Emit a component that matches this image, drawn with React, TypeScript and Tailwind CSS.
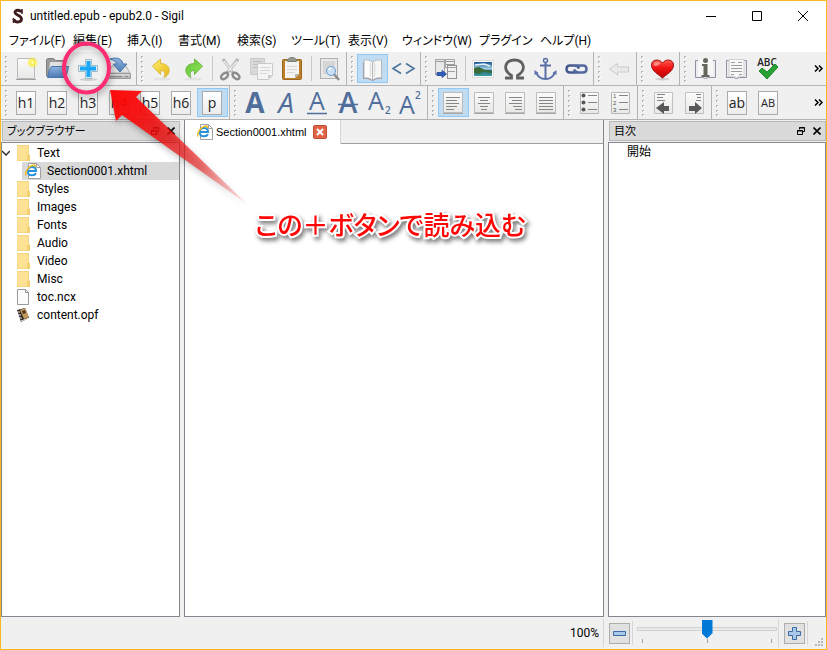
import React, { useState } from 'react';

const LATIN = "font-['Roboto','Noto_Sans_CJK_JP',sans-serif]";

/* ---------- Tool bar building blocks ---------- */

function Handle() {
  return (
    <span aria-hidden="true" className="flex w-[10px] shrink-0 justify-center pt-[2px]">
      <svg width="4" height="26" viewBox="0 0 4 26">
        {[0, 5, 10, 15, 20, 24].map((y) => (
          <g key={y}>
            <rect x="1" y={y} width="2" height="2" fill="#b4b4b4" />
            <rect x="2" y={y + 1} width="2" height="1" fill="#fff" />
          </g>
        ))}
      </svg>
    </span>
  );
}

function Group({ label, children, last = false }: { label: string; children: React.ReactNode; last?: boolean }) {
  return (
    <div
      role="toolbar"
      aria-label={label}
      className={
        last
          ? 'flex shrink-0 items-start'
          : 'flex shrink-0 items-start border-r border-[#b3b3b3] pr-px'
      }
    >
      <Handle />
      {children}
    </div>
  );
}

function Tool({ label, active = false, children }: { label: string; active?: boolean; children: React.ReactNode }) {
  return (
    <button
      type="button"
      aria-label={label}
      aria-pressed={active}
      className={
        active
          ? 'flex h-[29px] w-[31px] shrink-0 items-center justify-center bg-[#c0dcf3] outline outline-1 -outline-offset-1 outline-[#90c8f6]'
          : 'flex h-[29px] w-[31px] shrink-0 items-center justify-center hover:bg-[#dcebf7]'
      }
    >
      {children}
    </button>
  );
}

function Sep() {
  return <span className="flex h-[29px] w-[6px] shrink-0 justify-center py-[2px]"><span className="w-px bg-[#c8c8c8]" /></span>;
}

function Pic({ children }: { children: React.ReactNode }) {
  return (
    <svg width="31" height="29" viewBox="1 0 31 29" fill="none" className="shrink-0 overflow-visible" aria-hidden="true">
      {children}
    </svg>
  );
}

function Tile({ text, small = false }: { text: string; small?: boolean }) {
  return (
    <span
      className={
        (small ? 'text-[11px]' : 'text-[14px]') +
        " mr-px flex h-6 w-5 items-center justify-center border border-[#ababab] bg-linear-to-b from-white to-[#ececec] font-['Open_Sans',sans-serif] leading-none text-[#222]"
      }
    >
      {text}
    </span>
  );
}

function Lines({ rows }: { rows: [number, number, number][] }) {
  return (
    <Pic>
      <path d="M6.500 4.500h19v20h-19z" fill="url(#paper)" stroke="#bcbcbc" />
      <path d="M6 25.500h20" stroke="#a6a6a6" />
      {rows.map(([x1, x2, y]) => (
        <path key={y} d={`M${x1} ${y}H${x2}`} stroke="#858585" />
      ))}
    </Pic>
  );
}

function LetterA({ kind }: { kind: 'bold' | 'italic' | 'under' | 'strike' | 'sub' | 'super' }) {
  const small = kind === 'sub' || kind === 'super';
  return (
    <Pic>
      <g fill="#4f6e9c" className="font-['Open_Sans',sans-serif]">
        <text
          x={small ? 13 : 16}
          y={kind === 'super' ? 26 : kind === 'sub' ? 22 : kind === 'under' ? 22 : 25}
          textAnchor="middle"
          fontSize={small ? 25 : kind === 'under' ? 25 : 28}
          fontWeight={kind === 'bold' ? 700 : kind === 'strike' ? 600 : 500}
          fontStyle={kind === 'italic' ? 'italic' : 'normal'}
        >
          A
        </text>
        {kind === 'sub' && <text x="22" y="26" fontSize="10" fontWeight="600">2</text>}
        {kind === 'super' && <text x="21" y="11" fontSize="10" fontWeight="600">2</text>}
      </g>
      {kind === 'under' && <path d="M6 25.500h20" stroke="#4f6e9c" strokeWidth="1.500" />}
      {kind === 'strike' && <path d="M6 16.500h20" stroke="#4f6e9c" strokeWidth="1.500" />}
    </Pic>
  );
}

function Defs() {
  return (
    <svg width="0" height="0" className="absolute" aria-hidden="true">
      <defs>
        <linearGradient id="paper" x1="0" y1="0" x2="0" y2="1">
          <stop offset="0" stopColor="#fbfbfb" />
          <stop offset="1" stopColor="#e8e8e6" />
        </linearGradient>
        <linearGradient id="metal" x1="0" y1="0" x2="0" y2="1">
          <stop offset="0" stopColor="#e2e2e2" />
          <stop offset="1" stopColor="#a8a8a8" />
        </linearGradient>
        <linearGradient id="blue" x1="0" y1="0" x2="0" y2="1">
          <stop offset="0" stopColor="#8fb5df" />
          <stop offset="1" stopColor="#4c7ab4" />
        </linearGradient>
        <linearGradient id="gold" x1="0" y1="0" x2="1" y2="1">
          <stop offset="0" stopColor="#fff06c" />
          <stop offset="1" stopColor="#e6b41c" />
        </linearGradient>
        <linearGradient id="green" x1="0" y1="0" x2="1" y2="1">
          <stop offset="0" stopColor="#67c23a" />
          <stop offset="1" stopColor="#8fe856" />
        </linearGradient>
        <radialGradient id="glow">
          <stop offset="0" stopColor="#fffde0" />
          <stop offset=".35" stopColor="#fbf24a" />
          <stop offset="1" stopColor="#f7ea2a" stopOpacity="0" />
        </radialGradient>
        <linearGradient id="heart" x1="0" y1="0" x2="0" y2="1">
          <stop offset="0" stopColor="#ff5a4e" />
          <stop offset=".45" stopColor="#f01414" />
          <stop offset="1" stopColor="#b80000" />
        </linearGradient>
        <linearGradient id="sea" x1="0" y1="0" x2="0" y2="1">
          <stop offset="0" stopColor="#17548f" />
          <stop offset=".5" stopColor="#a8d4e8" />
          <stop offset=".6" stopColor="#2f6f84" />
          <stop offset="1" stopColor="#3b9aa4" />
        </linearGradient>
      </defs>
    </svg>
  );
}

/* ---------- Pictures ---------- */

const NewPic = () => (
  <Pic>
    <path d="M7.500 4.500h17v20h-17z" fill="url(#paper)" stroke="#b9b9b9" />
    <path d="M6 25.500h20" stroke="#a0a0a0" />
    <circle cx="22.500" cy="8.500" r="6" fill="url(#glow)" />
  </Pic>
);

const OpenPic = () => (
  <Pic>
    <path d="M5.500 22V5.500l1-1h6l2 2h9l1 1V22z" fill="#9a9a9a" stroke="#808080" />
    <path d="M9 8h14l1 12H8z" fill="#e2e2e2" />
    <path d="M10.500 12.500h17l-2.500 11H6.500l2-8z" fill="url(#blue)" stroke="#4a76ae" />
  </Pic>
);

const PlusPic = () => (
  <Pic>
    <ellipse cx="16.500" cy="25.500" rx="9" ry="1.500" fill="#cfcfcf" />
    <path d="M13.500 5.500h6v6h6v6h-6v7h-6v-7h-7v-6h7z" fill="#d9f0fb" stroke="#a3bac7" />
    <path d="M16.500 7v16M8 14.500h16" stroke="#1aa7f5" strokeWidth="4" />
  </Pic>
);

const SavePic = () => (
  <Pic>
    <path d="M9 12h14l4 7H5z" fill="#e2e2e2" stroke="#b0b0b0" />
    <path d="M4.500 19.500h23v5h-23z" fill="url(#metal)" stroke="#9a9a9a" />
    <path d="M7 5c6-2 12-1 13 5h4l-7 8-7-8h4c-1-2-3-4-7-5z" fill="url(#blue)" stroke="#4a78b2" />
    <path d="M7 22.500h12M22 22.500h3" stroke="#8a8a8a" />
  </Pic>
);

const UndoPic = () => (
  <Pic>
    <ellipse cx="16" cy="25" rx="9" ry="1.500" fill="#e2e2e2" />
    <path d="M6.500 12l8-7v4.500c6 0 9.500 3.500 8.500 8.500-.5 2.500-3 5-5 5.500 1.500-3 1.500-7-3.500-7v4z" fill="url(#gold)" stroke="#dcb93c" />
  </Pic>
);

const RedoPic = () => (
  <Pic>
    <ellipse cx="16" cy="25" rx="9" ry="1.500" fill="#e2e2e2" />
    <path d="M25.500 12l-8-7v4.500c-6 0-9.500 3.500-8.500 8.500.5 2.500 3 5 5 5.500-1.500-3-1.500-7 3.500-7v4z" fill="url(#green)" stroke="#6fb84c" />
  </Pic>
);

const CutPic = () => (
  <Pic>
    <path d="M9 5l10 14M24 5L13 19" stroke="#b2b2b2" strokeWidth="3" />
    <path d="M10 7l8 10M23 7l-9 10" stroke="#ececec" strokeWidth="1.500" />
    <ellipse cx="10.500" cy="22" rx="4" ry="2.500" transform="rotate(-40 10.500 22)" stroke="#8c8c8c" strokeWidth="2.500" />
    <ellipse cx="22" cy="22" rx="4" ry="2.500" transform="rotate(40 22 22)" stroke="#8c8c8c" strokeWidth="2.500" />
  </Pic>
);

const CopyPic = () => (
  <Pic>
    <path d="M5.500 4.500h14v16h-14z" fill="#d9d9d9" stroke="#cacaca" />
    <path d="M8 7.500h9M8 10.500h7M8 13.500h4" stroke="#bdbdbd" />
    <path d="M12.500 9.500h15v12l-4 4h-11z" fill="#f4f4f4" stroke="#cacaca" />
    <path d="M15 13.500h10M15 16.500h10M15 19.500h7" stroke="#d6d6d6" />
    <path d="M27 21l-4 4v-4z" fill="#c9c9c9" />
  </Pic>
);

const PastePic = () => (
  <Pic>
    <rect x="6.500" y="5.500" width="19" height="20" rx="1" fill="#bd7f28" stroke="#9a6821" />
    <path d="M9 7h14v13l-4 4H9z" fill="#f3f3f1" />
    <path d="M23 20l-4 4v-4z" fill="#b5b5b5" />
    <path d="M11 12.500h10M11 15.500h10M11 18.500h8" stroke="#d8d8d8" />
    <path d="M11.500 7.500v-2l3-2h3l3 2v2z" fill="#949990" stroke="#7c8076" />
  </Pic>
);

const FindPic = () => (
  <Pic>
    <rect x="7.500" y="4.500" width="17" height="20" fill="#e8e8e8" stroke="#b0b0b0" />
    <path d="M10 7h12v13H10z" fill="#d6d6d6" />
    <path d="M21 20l5 6" stroke="#8a8d93" strokeWidth="2.500" />
    <circle cx="18" cy="17" r="4.500" fill="#c9e0f5" stroke="#6d9acd" />
    <path d="M15.500 16q1-2 3-2" stroke="#fff" strokeWidth="1.500" />
  </Pic>
);

const BookPic = () => (
  <Pic>
    <path d="M7 8v17q5-1 9.500 2 4.500-3 9.500-2V8" fill="#8b8d96" />
    <path d="M8 6q5-1 8.500 2v18q-3.500-3-8.500-2z" fill="#fdfdfd" stroke="#b8b8b8" />
    <path d="M25.500 6q-5-1-9 2v18q4-3 9-2z" fill="#f6f6f6" stroke="#b8b8b8" />
    <path d="M14.500 9v14M18.500 9v14" stroke="#e0e0e0" strokeWidth="1.500" />
  </Pic>
);

const CodePic = () => (
  <Pic>
    <path d="M14 9.500l-8 5 8 5M19 9.500l8 5-8 5" stroke="#4a759f" strokeWidth="1.600" />
  </Pic>
);

const SplitPic = () => (
  <Pic>
    <rect x="5.500" y="5.500" width="9" height="15" fill="#e8e8e8" stroke="#a6a6a6" />
    <path d="M6 7.500h8" stroke="#9a9a9a" />
    <rect x="15.500" y="5.500" width="9" height="8" fill="#f0f0f0" stroke="#a6a6a6" />
    <path d="M16 7.500h8M16 10.500h8" stroke="#9a9a9a" />
    <rect x="17.500" y="11.500" width="9" height="13" fill="#f0f0f0" stroke="#949494" />
    <path d="M18 13.500h8M18 17.500h7" stroke="#a0a0a0" />
    <path d="M7 18.500h5v-2l4.500 3.500-4.500 3.500v-2H7z" fill="#2e5bbd" stroke="#35559c" />
  </Pic>
);

const ImagePic = () => (
  <Pic>
    <rect x="5.500" y="6.500" width="21" height="17" fill="#fff" stroke="#dcdcdc" />
    <path d="M7 8h18v14H7z" fill="url(#sea)" />
    <path d="M7 14l5-1 6 3 7 1v2l-9-1-4 2-5-1z" fill="#386b36" />
    <path d="M8 11l9-1 6 2" stroke="#e6f3fa" strokeWidth="1.500" />
  </Pic>
);

const OmegaPic = () => (
  <Pic>
    <path
      d="M7 24h6.500v-2.500C4 16 7 6 16.500 6s12.500 10 3 15.500V24H26"
      stroke="#606060"
      strokeWidth="2.800"
    />
  </Pic>
);

const AnchorPic = () => (
  <Pic>
    <circle cx="16.500" cy="6.500" r="2" stroke="#5a6fa8" strokeWidth="1.500" />
    <path d="M16.500 9v16M11 11.500h11M7 18q2.500 7 9.500 7t9.500-7" stroke="#5a6fa8" strokeWidth="2" />
    <path d="M5.500 21v-5l4 3zM27.500 21v-5l-4 3z" fill="#5a6fa8" />
  </Pic>
);

const LinkPic = () => (
  <Pic>
    <path d="M18 17.500q-1 1-3 1h-5q-3.500 0-3.500-3.500t3.500-3.500h5q3 0 4 3" stroke="#46598f" strokeWidth="2.500" />
    <path d="M15 12.500q1-1 3-1h5q3.500 0 3.500 3.500t-3.500 3.500h-5q-3 0-4-3" stroke="#5468a0" strokeWidth="2.500" />
  </Pic>
);

const BackPic = () => (
  <Pic>
    <path d="M6.500 15l8-5.500v3.500h11v5h-11v3z" fill="#e9e9e9" stroke="#cbcbcb" />
  </Pic>
);

const HeartPic = () => (
  <Pic>
    <ellipse cx="16.500" cy="25" rx="7" ry="1.500" fill="#cfcfcf" />
    <path d="M16.500 24C12 20 5.500 17 5.500 11c0-6 8-6.500 11-2 3-4.500 11-4 11 2 0 6-6.500 9-11 13z" fill="url(#heart)" stroke="#a01818" />
    <path d="M7.500 11c0-4 4-4 7-2-2 3-5 4-7 2z" fill="#ff9c92" opacity=".8" />
  </Pic>
);

const InfoPic = () => (
  <Pic>
    <path d="M9 6.500H6.500v17h7q3 2 6 0h7v-17H24" fill="#ededf0" stroke="#8f90a6" />
    <path d="M9 5h15v17q-5-1-7.500 1.500Q14 21 9 22z" fill="#f7f7f7" />
    <circle cx="16.500" cy="6.500" r="2.500" fill="#66665c" />
    <path d="M13 10h5.500v11h2v2h-8v-2h2v-9H13z" fill="#66665c" />
  </Pic>
);

const TocPic = () => (
  <Pic>
    <path d="M9 6.500H6.500v17h7q3 2 6 0h7v-17H24" fill="#ededf0" stroke="#8f90a6" />
    <path d="M9 5.500h15v17q-5-1-7.500 1Q14 21.500 9 22.500z" fill="#f9f9f9" stroke="#d0d0d0" />
    <path d="M11 8.500h4M18 8.500h4M11 11.500h11M11 14.500h11M11 17.500h11M11 20.500h3M19 20.500h3" stroke="#9c9c9c" />
  </Pic>
);

const SpellPic = () => (
  <Pic>
    <text x="16" y="12" textAnchor="middle" fontSize="10" fontWeight="600" fill="#222" className="font-['Open_Sans',sans-serif]">ABC</text>
    <path d="M8 17l3-3 5 4 8-8 3 3-11 12z" fill="#28a034" stroke="#238a2e" />
  </Pic>
);

const ListPic = ({ numbered = false }: { numbered?: boolean }) => (
  <Pic>
    <path d="M7.500 4.500h18v21h-18z" fill="url(#paper)" stroke="#b6b6b6" />
    {[8, 15, 22].map((y, i) => (
      <g key={y}>
        {numbered ? (
          <text x="9" y={y + 2} fontSize="6" fill="#555" className="font-['Liberation_Sans',sans-serif]">{i + 1}</text>
        ) : (
          <circle cx="10.500" cy={y - 0.5} r="2" fill="#555" />
        )}
        <path d={`M15 ${y - 0.5}h9`} stroke="#858585" />
      </g>
    ))}
  </Pic>
);

const IndentPic = ({ right = false }: { right?: boolean }) => (
  <Pic>
    <path d="M7.500 4.500h18v21h-18z" fill="url(#paper)" stroke="#c0c0c0" />
    {right ? (
      <>
        <path d="M18 6.500h5M19 9.500h4M18 12.500h5" stroke="#858585" />
        <path d="M11 18h6v-4l7 6-7 6v-3h-6z" fill="#585858" />
      </>
    ) : (
      <>
        <path d="M10 6.500h8M10 9.500h6M10 12.500h8" stroke="#858585" />
        <path d="M22 18h-5v-4l-8 6 8 6v-3h5z" fill="#585858" />
      </>
    )}
  </Pic>
);

function PageGlobe() {
  return (
    <svg width="16" height="16" viewBox="0 0 16 16" fill="none" className="shrink-0" aria-hidden="true">
      <path d="M3.500.5h8l4 4v11h-12z" fill="#fff" stroke="#a0a0a0" />
      <path d="M11.500.5v4h4" stroke="#a0a0a0" />
      <path d="M3 8h8q0-4-4-4T2.800 8.200 7 12.200q3 0 4-2" stroke="#2b92d8" strokeWidth="2" />
      <path d="M1 12.500C-.5 9 4 2.500 9 2q2 0 1 2" stroke="#f1bd20" strokeWidth="1.500" />
    </svg>
  );
}

function Folder() {
  return (
    <svg width="13" height="16" viewBox="0 0 13 16" className="shrink-0" aria-hidden="true">
      <path d="M0 0h12v9l1 1v6H0z" fill="#f5d57e" />
      <path d="M0 1h11v14H1z" fill="#fde195" />
      <path d="M10 10h3v6h-3z" fill="#f3d070" />
    </svg>
  );
}

function FilePage() {
  return (
    <svg width="13" height="16" viewBox="0 0 13 16" className="shrink-0" aria-hidden="true">
      <path d="M.5.500h8l3 3v12H.5z" fill="#fcfcfc" stroke="#9a9a9a" />
      <path d="M8.500.5v3h3" fill="none" stroke="#9a9a9a" />
    </svg>
  );
}

function OpfFile() {
  return (
    <svg width="13" height="16" viewBox="0 0 13 16" className="shrink-0" aria-hidden="true">
      <path d="M0 3l8-2 4 10-8 4z" fill="#2c2722" />
      <path d="M3 3l5-2 4 9-5 2z" fill="#c49a5c" />
      <path d="M5 4l3-1 1 3-3 1z" fill="#4b3a26" />
      <path d="M0 5h3M1 8h3M2 11h3" stroke="#eee" />
      <path d="M4 14l8-3" stroke="#eee8dc" />
    </svg>
  );
}

/* ---------- Dock title ---------- */

function DockTitle({ title }: { title: string }) {
  return (
    <div className="ml-px mt-px flex h-5 items-center border border-[#b9b9b9] bg-[#dadada] pl-1">
      <h2 className="flex-1 truncate text-[11px] leading-[18px] font-['Liberation_Sans','Noto_Sans_CJK_JP',sans-serif] [font-feature-settings:'palt']">{title}</h2>
      <button type="button" aria-label={title + ' float'} className="flex size-4 items-center justify-center">
        <svg width="8" height="8" viewBox="0 0 8 8" fill="none" stroke="#000" aria-hidden="true">
          <path d="M2.500 2.500v-2h5v4h-2M2 1h6" />
          <path d="M.5 3.500h5v4h-5zM0 4h6" />
        </svg>
      </button>
      <button type="button" aria-label={title + ' close'} className="flex size-4 items-center justify-center">
        <svg width="8" height="8" viewBox="0 0 8 8" fill="none" stroke="#000" strokeWidth="1.600" aria-hidden="true">
          <path d="M.5.500l7 7M7.500.500l-7 7" />
        </svg>
      </button>
    </div>
  );
}

const MENUS: [string, string][] = [
  ['ファイル(F)', 'w-16'],
  ['編集(E)', 'w-[54px]'],
  ['挿入(I)', 'w-[51px]'],
  ['書式(M)', 'w-[59px]'],
  ['検索(S)', 'w-[54px]'],
  ['ツール(T)', 'w-[57px]'],
  ['表示(V)', 'w-[54px]'],
  ['ウィンドウ(W)', 'w-[77px]'],
  ['プラグイン', 'w-[61px]'],
  ['ヘルプ(H)', 'w-16'],
];

const FOLDERS = ['Styles', 'Images', 'Fonts', 'Audio', 'Video', 'Misc'];

function Overflow() {
  return (
    <button type="button" aria-label="More" className="ml-auto flex w-4 shrink-0 items-center justify-center">
      <svg width="9" height="7" viewBox="0 0 9 7" fill="none" stroke="#000" strokeWidth="1.500" aria-hidden="true">
        <path d="M1 .5l3 3-3 3M5 .5l3 3-3 3" />
      </svg>
    </button>
  );
}

export default function App() {
  const [zoom, setZoom] = useState(50);
  return (
    <div className={LATIN + ' relative flex h-screen flex-col overflow-hidden border border-[#f9b81c] bg-[#f0f0f0] text-[12px] text-black'}>
      <Defs />

      <header className="bg-white">
        <div className="flex h-[29px] items-center pl-[10px]">
          <svg width="14" height="16" viewBox="0 0 14 16" fill="none" aria-hidden="true">
            <path d="M10 4.500C10 1.500 3.500 1.500 4 4.500 4.500 7.500 10.500 7 10.500 11c0 4-7.500 4-7.500 0" stroke="#3d1a1c" strokeWidth="2.800" />
            <path d="M11 1v5M2.500 10v5" stroke="#3d1a1c" strokeWidth="1.500" />
          </svg>
          <h1 className="ml-[5px] flex-1 truncate">untitled.epub - epub2.0 - Sigil</h1>
          <button type="button" aria-label="Minimize" className="flex h-full w-[46px] items-center justify-center">
            <svg width="10" height="10" viewBox="0 0 10 10" stroke="#000" aria-hidden="true"><path d="M0 5.500h10" /></svg>
          </button>
          <button type="button" aria-label="Maximize" className="flex h-full w-[46px] items-center justify-center">
            <svg width="10" height="10" viewBox="0 0 10 10" fill="none" stroke="#000" aria-hidden="true"><path d="M.5.500h9v9h-9z" /></svg>
          </button>
          <button type="button" aria-label="Close" className="flex h-full w-[46px] items-center justify-center">
            <svg width="10" height="10" viewBox="0 0 10 10" stroke="#000" aria-hidden="true"><path d="M0 0l10 10M10 0L0 10" /></svg>
          </button>
        </div>
        <nav className="flex h-[22px] items-center">
          {MENUS.map(([name, width]) => (
            <button key={name} type="button" className={width + " shrink-0 whitespace-nowrap pl-2 text-left leading-[22px] [font-feature-settings:'palt']"}>
              {name}
            </button>
          ))}
        </nav>
      </header>

      <div className="flex h-[34px] shrink-0 border-b border-[#b3b3b3] [&>div]:pt-[2px]">
        <Group label="File">
          <Tool label="New"><NewPic /></Tool>
          <Tool label="Open"><OpenPic /></Tool>
          <Tool label="Add existing files"><PlusPic /></Tool>
          <Tool label="Save"><SavePic /></Tool>
        </Group>
        <Group label="Edit">
          <Tool label="Undo"><UndoPic /></Tool>
          <Tool label="Redo"><RedoPic /></Tool>
          <Sep />
          <Tool label="Cut"><CutPic /></Tool>
          <Tool label="Copy"><CopyPic /></Tool>
          <Tool label="Paste"><PastePic /></Tool>
          <Sep />
          <Tool label="Find"><FindPic /></Tool>
        </Group>
        <Group label="View">
          <Tool label="Book view" active><BookPic /></Tool>
          <Tool label="Code view"><CodePic /></Tool>
        </Group>
        <Group label="Insert">
          <Tool label="Split"><SplitPic /></Tool>
          <Sep />
          <Tool label="Image"><ImagePic /></Tool>
          <Tool label="Special character"><OmegaPic /></Tool>
          <Tool label="Anchor"><AnchorPic /></Tool>
          <Tool label="Link"><LinkPic /></Tool>
        </Group>
        <Group label="Back"><Tool label="Back"><BackPic /></Tool></Group>
        <Group label="Donate"><Tool label="Donate"><HeartPic /></Tool></Group>
        <Group label="Tools" last>
          <Tool label="Metadata"><InfoPic /></Tool>
          <Tool label="Table of contents"><TocPic /></Tool>
          <Tool label="Spell check"><SpellPic /></Tool>
        </Group>
        <Overflow />
      </div>

      <div className="flex h-[34px] shrink-0 border-b border-[#b3b3b3] [&>div]:pt-[2px]">
        <Group label="Headings">
          {['h1', 'h2', 'h3', 'h4', 'h5', 'h6'].map((h) => (
            <Tool key={h} label={h}><Tile text={h} /></Tool>
          ))}
          <Tool label="p" active><Tile text="p" /></Tool>
        </Group>
        <Group label="Format">
          <Tool label="Bold"><LetterA kind="bold" /></Tool>
          <Tool label="Italic"><LetterA kind="italic" /></Tool>
          <Tool label="Underline"><LetterA kind="under" /></Tool>
          <Tool label="Strikethrough"><LetterA kind="strike" /></Tool>
          <Tool label="Subscript"><LetterA kind="sub" /></Tool>
          <Tool label="Superscript"><LetterA kind="super" /></Tool>
        </Group>
        <Group label="Align">
          <Tool label="Left" active><Lines rows={[[9, 23, 9.5], [9, 20, 12.5], [9, 22, 15.5], [9, 20, 18.5], [9, 17, 21.5]]} /></Tool>
          <Tool label="Center"><Lines rows={[[10, 22, 9.5], [12, 20, 12.5], [10, 22, 15.5], [12, 20, 18.5], [13, 19, 21.5]]} /></Tool>
          <Tool label="Right"><Lines rows={[[10, 23, 9.5], [13, 23, 12.5], [10, 23, 15.5], [14, 23, 18.5], [16, 23, 21.5]]} /></Tool>
          <Tool label="Justify"><Lines rows={[[9, 23, 9.5], [9, 23, 12.5], [9, 23, 15.5], [9, 23, 18.5], [9, 23, 21.5]]} /></Tool>
        </Group>
        <Group label="Lists">
          <Tool label="Bulleted"><ListPic /></Tool>
          <Tool label="Numbered"><ListPic numbered /></Tool>
        </Group>
        <Group label="Indent">
          <Tool label="Outdent"><IndentPic /></Tool>
          <Tool label="Indent"><IndentPic right /></Tool>
        </Group>
        <Group label="Case" last>
          <Tool label="Lowercase"><Tile text="ab" /></Tool>
          <Tool label="Uppercase"><Tile text="AB" small /></Tool>
        </Group>
        <Overflow />
      </div>

      <main className="flex min-h-0 flex-1 gap-1">
        <section className="flex w-[179px] shrink-0 flex-col gap-px">
          <DockTitle title="ブックブラウザー" />
          <ul className="flex-1 border border-[#828790] bg-white pt-px leading-[18px]">
            <li>
              <div className="flex h-[18px] items-center">
                <svg width="8" height="6" viewBox="0 0 8 6" fill="none" stroke="#333" strokeWidth="1.500" className="mr-[7px]" aria-hidden="true">
                  <path d="M0 1l4 4 4-4" />
                </svg>
                <Folder />
                <span className="ml-[7px]">Text</span>
              </div>
              <ul>
                <li className="ml-5 flex h-[18px] items-center bg-[#d9d9d9] pl-[3px]">
                  <PageGlobe />
                  <span className="ml-[6px]">Section0001.xhtml</span>
                </li>
              </ul>
            </li>
            {FOLDERS.map((name) => (
              <li key={name} className="flex h-[18px] items-center pl-[15px]">
                <Folder />
                <span className="ml-[7px]">{name}</span>
              </li>
            ))}
            <li className="flex h-[18px] items-center pl-[15px]"><FilePage /><span className="ml-[7px]">toc.ncx</span></li>
            <li className="flex h-[18px] items-center pl-[15px]"><OpfFile /><span className="ml-[7px]">content.opf</span></li>
          </ul>
        </section>

        <section className="flex min-w-0 flex-1 flex-col border-x border-b border-[#828790]">
          <div className="flex h-[24px] shrink-0">
            <div className="flex w-[156px] items-center border-r border-[#d4d4d4] bg-white pl-3 font-['Liberation_Sans',sans-serif]">
              <PageGlobe />
              <span className="ml-[3px] w-[93px] whitespace-nowrap text-[11px]">Section0001.xhtml</span>
              <button type="button" aria-label="Close tab" className="ml-1 flex size-[14px] shrink-0 items-center justify-center rounded-[2px] border border-[#c04a30] bg-[#e0654a]">
                <svg width="8" height="8" viewBox="0 0 8 8" stroke="#fff" strokeWidth="2" aria-hidden="true"><path d="M1 1l6 6M7 1L1 7" /></svg>
              </button>
            </div>
            <div className="flex-1 border-b border-[#a0a0a0]" />
          </div>
          <div className="flex-1 bg-white" />
        </section>

        <section className="flex w-[218px] shrink-0 flex-col gap-px">
          <DockTitle title="目次" />
          <ul className="flex-1 border border-[#828790] bg-white leading-[18px]">
            <li className="pl-[18px]">開始</li>
          </ul>
        </section>
      </main>

      <footer className="flex h-8 shrink-0 items-center justify-end">
        <output htmlFor="zoom" className="mr-1">{zoom * 2}%</output>
        <span className="h-7 w-px bg-[#d7d7d7]" />
        <button type="button" aria-label="Zoom out" className="ml-[5px] flex size-[21px] items-center justify-center border border-[#adadad] bg-[#e1e1e1]">
          <svg width="13" height="13" viewBox="0 0 13 13" aria-hidden="true"><path d="M.5 4.500h12v4H.5z" fill="#a9c8e8" stroke="#3b6aa8" /></svg>
        </button>
        <span className="ml-[2px] h-6 w-px bg-[#d7d7d7]" />
        <div className="mb-1 ml-1 flex w-[140px] flex-col">
          <input
            id="zoom"
            type="range"
            aria-label="Zoom"
            min={0}
            max={100}
            value={zoom}
            onChange={(e) => setZoom(Number(e.target.value))}
            className="h-[19px] w-full appearance-none bg-transparent [&::-webkit-slider-runnable-track]:h-1 [&::-webkit-slider-runnable-track]:bg-[#e7eaea] [&::-webkit-slider-runnable-track]:outline [&::-webkit-slider-runnable-track]:outline-1 [&::-webkit-slider-runnable-track]:-outline-offset-1 [&::-webkit-slider-runnable-track]:outline-[#d0d0d0] [&::-webkit-slider-thumb]:-mt-[7px] [&::-webkit-slider-thumb]:h-[19px] [&::-webkit-slider-thumb]:w-[11px] [&::-webkit-slider-thumb]:appearance-none [&::-webkit-slider-thumb]:bg-[#0078d7] [&::-webkit-slider-thumb]:[clip-path:polygon(0_0,100%_0,100%_72%,50%_100%,0_72%)]"
          />
          <div className="mt-px flex h-1 justify-between px-[5px]">
            <span className="w-px bg-[#a0a0a0]" />
            <span className="w-px bg-[#a0a0a0]" />
            <span className="w-px bg-[#a0a0a0]" />
          </div>
        </div>
        <span className="ml-px h-7 w-px bg-[#d7d7d7]" />
        <button type="button" aria-label="Zoom in" className="ml-[5px] flex size-[21px] items-center justify-center border border-[#adadad] bg-[#e1e1e1]">
          <svg width="13" height="13" viewBox="0 0 13 13" aria-hidden="true"><path d="M4.500.500h4v4h4v4h-4v4h-4v-4h-4v-4h4z" fill="#a9c8e8" stroke="#3b6aa8" /></svg>
        </button>
        <span className="ml-[2px] mr-[7px] h-6 w-px bg-[#d7d7d7]" />
        <svg width="9" height="9" viewBox="0 0 9 9" fill="#b8b8b8" className="mr-[2px] mb-[2px] self-end" aria-hidden="true">
          <path d="M6 0h2v2H6zM3 3h2v2H3zM6 3h2v2H6zM0 6h2v2H0zM3 6h2v2H3zM6 6h2v2H6z" />
        </svg>
      </footer>

      {/* Callout drawn over the window */}
      <svg width="260" height="220" viewBox="0 0 260 220" fill="none" className="pointer-events-none absolute -left-px -top-px" aria-hidden="true">
        <defs>
          <linearGradient id="tail" gradientUnits="userSpaceOnUse" x1="112" y1="90" x2="248" y2="205">
            <stop offset="0" stopColor="#ff0505" stopOpacity=".97" />
            <stop offset=".2" stopColor="#fb0a0a" stopOpacity=".92" />
            <stop offset=".4" stopColor="#f40c0c" stopOpacity=".78" />
            <stop offset=".65" stopColor="#ee1c1c" stopOpacity=".62" />
            <stop offset="1" stopColor="#f04040" stopOpacity=".12" />
          </linearGradient>
        </defs>
        <g className="drop-shadow-[1px_3px_3px_rgba(0,0,0,0.35)]">
          <ellipse cx="86.500" cy="68" rx="22.500" ry="24.500" stroke="#fb2c72" strokeWidth="4" />
          <path d="M110 90l32 1-6 6 111 107-125-89-6 6z" fill="url(#tail)" />
        </g>
      </svg>
      <p className="pointer-events-none absolute left-[254px] top-[204px] whitespace-nowrap text-[26px] leading-[38px] font-medium text-[#ff0505] drop-shadow-[2px_3px_2px_rgba(0,0,0,0.5)] [-webkit-text-stroke:4px_white] [paint-order:stroke_fill] font-['Noto_Sans_CJK_JP',sans-serif] [font-feature-settings:'palt']">
        この＋ボタンで読み込む
      </p>
    </div>
  );
}
